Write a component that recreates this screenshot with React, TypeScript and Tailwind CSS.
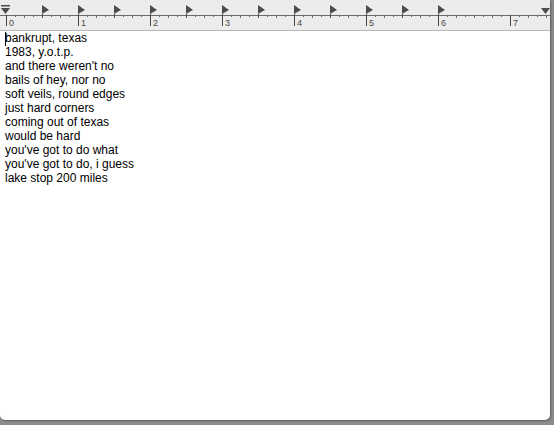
const lines = [
  'bankrupt, texas',
  '1983, y.o.t.p.',
  "and there weren't no",
  'bails of hey, nor no',
  'soft veils, round edges',
  'just hard corners',
  'coming out of texas',
  'would be hard',
  "you've got to do what",
  "you've got to do, i guess",
  'lake stop 200 miles',
];

// ruler: 72px per inch, origin near the left margin
const ORIGIN = 6;
const INCH = 72;

function Ruler() {
  const ticks = [];
  for (let i = 0; i * 9 + ORIGIN < 550; i++) {
    const x = ORIGIN + i * 9 + 0.5;
    if (i % 8 === 0) continue;
    const len = i % 2 === 0 ? 3 : 2;
    ticks.push(<line key={`t${i}`} x1={x} y1={15} x2={x} y2={15 + len} stroke="#6b6b6b" strokeWidth={1} />);
  }
  const majors = [];
  for (let n = 0; n <= 7; n++) {
    const x = ORIGIN + n * INCH + 0.5;
    majors.push(
      <g key={`m${n}`}>
        <line x1={x} y1={15} x2={x} y2={26} stroke="#444" strokeWidth={1} />
        <text x={x + 2.5} y={26} fontSize={9} fill="#4a4a4a" fontFamily="'Liberation Sans', Arial, sans-serif">
          {n}
        </text>
      </g>
    );
  }
  const tabs = [];
  for (let k = 1; k <= 12; k++) {
    const x = ORIGIN + k * 36;
    tabs.push(
      <g key={`s${k}`}>
        <polygon points={`${x},5 ${x + 7},10 ${x},14`} fill="#4d4d4d" />
        <line x1={x + 0.5} y1={14} x2={x + 0.5} y2={18} stroke="#4d4d4d" strokeWidth={1} />
      </g>
    );
  }
  return (
    <div className="h-[31px] bg-[#ececec] border-b border-[#b8b8b8]">
      <svg width="550" height="30" className="block">
        <line x1={0} y1={15.5} x2={550} y2={15.5} stroke="#6b6b6b" strokeWidth={1} />
        {ticks}
        {majors}
        {tabs}
        {/* left indent markers */}
        <rect x={1} y={5} width={9} height={1.5} fill="#4d4d4d" />
        <polygon points="1,8 10,8 5.5,14" fill="#4d4d4d" />
        {/* right margin */}
        <polygon points="541,8 550,8 545.5,14" fill="#4d4d4d" />
      </svg>
    </div>
  );
}

export default function App() {
  return (
    <div className="w-[554px] h-[425px] bg-[#8c8c8c] overflow-hidden">
      <div className="w-[550px] h-[420px] bg-white rounded-b-[5px] overflow-hidden shadow-[1px_1px_2px_rgba(0,0,0,0.35)]">
        <Ruler />
        <div className="relative pl-[5px] font-['Liberation_Sans',Arial,sans-serif] text-[12px] leading-[14px] text-black">
          <span className="absolute left-[5px] top-[1px] w-px h-[14px] bg-black" />
          {lines.map((l, i) => (
            <div key={i}>{l}</div>
          ))}
        </div>
      </div>
    </div>
  );
}
